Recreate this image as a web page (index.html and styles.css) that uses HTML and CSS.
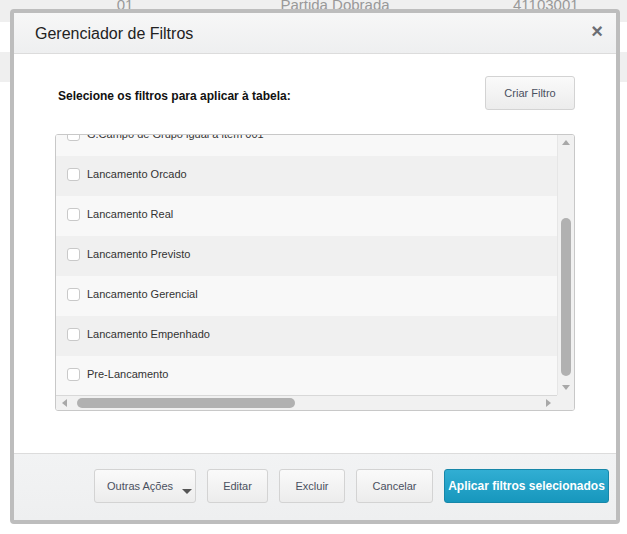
FILE: index.html
```html
<!DOCTYPE html>
<html lang="pt-BR">
<head>
    <meta charset="UTF-8">
    <title>Gerenciador de Filtros</title>
    <link rel="stylesheet" href="styles.css">
</head>
<body>
    <table class="grid">
        <colgroup><col class="c1"><col class="c2"><col class="c3"></colgroup>
        <tr class="odd"><td>01</td><td>Partida Dobrada</td><td class="num">41103001</td></tr>
        <tr><td></td><td></td><td></td></tr>
        <tr class="odd"><td></td><td></td><td></td></tr>
        <tr><td></td><td></td><td></td></tr>
    </table>

    <div class="modal">
        <div class="modal-header">
            <h3>Gerenciador de Filtros</h3>
            <span class="close">&times;</span>
        </div>

        <div class="modal-body">
            <div class="toolbar">
                <label>Selecione os filtros para aplicar à tabela:</label>
                <button class="btn">Criar Filtro</button>
            </div>

            <div class="list-box">
                <div class="list-view">
                    <ul class="filter-list">
                        <li><span class="check"></span>G.Campo de Grupo igual a item 001</li>
                        <li><span class="check"></span>Lancamento Orcado</li>
                        <li><span class="check"></span>Lancamento Real</li>
                        <li><span class="check"></span>Lancamento Previsto</li>
                        <li><span class="check"></span>Lancamento Gerencial</li>
                        <li><span class="check"></span>Lancamento Empenhado</li>
                        <li><span class="check"></span>Pre-Lancamento</li>
                    </ul>
                </div>
                <div class="vscroll">
                    <span class="arrow up"></span>
                    <div class="vtrack"><div class="vthumb"></div></div>
                    <span class="arrow down"></span>
                </div>
                <div class="hscroll">
                    <span class="arrow left"></span>
                    <div class="htrack"><div class="hthumb"></div></div>
                    <span class="arrow right"></span>
                </div>
                <div class="corner"></div>
            </div>
        </div>

        <div class="modal-footer">
            <button class="btn btn-menu">Outras Ações<span class="caret"></span></button>
            <button class="btn w-edit">Editar</button>
            <button class="btn w-del">Excluir</button>
            <button class="btn w-cancel">Cancelar</button>
            <button class="btn btn-primary">Aplicar filtros selecionados</button>
        </div>
    </div>
</body>
</html>
```

FILE: styles.css
```css
body {
    margin: 0;
    font-family: 'Liberation Sans', Arial, sans-serif;
    background: #fff;
    color: #333;
    overflow: hidden;
}
.grid {
    width: 100%;
    table-layout: fixed;
    border-collapse: collapse;
}
.grid .c1 { width: 250px; }
.grid .c2 { width: 170px; }
.grid td {
    height: 30px;
    padding: 0;
    text-align: center;
    color: #999;
    font-size: 15px;
    vertical-align: top;
    line-height: 28px;
    white-space: nowrap;
}
.grid td.num {
    text-align: left;
    padding-left: 93px;
}
.grid tr:first-child td {
    height: 22px;
    line-height: 10px;
}
.grid tr.odd td {
    background: #efefef;
}
.modal {
    position: absolute;
    left: 10px;
    top: 9px;
    width: 602px;
    border: 4px solid #bdbdbd;
    border-radius: 4px;
    background: #fff;
}
.modal-header {
    height: 40px;
    display: flex;
    align-items: center;
    justify-content: space-between;
    padding: 0 13px 0 21px;
    background: linear-gradient(#f7f7f7, #eeeff0);
    border-bottom: 1px solid #dcdcdc;
}
.modal-header h3 {
    margin: 0;
    font-weight: normal;
    font-size: 16px;
    color: #222;
    padding-top: 2px;
}
.close {
    font-size: 20px;
    font-weight: bold;
    color: #6b6e74;
    margin-top: -4px;
}
.modal-body {
    padding: 22px 41px 42px;
}
.toolbar {
    display: flex;
    justify-content: space-between;
    align-items: center;
    margin-bottom: 24px;
}
.toolbar label {
    font-weight: bold;
    font-size: 12px;
    color: #111;
    padding: 5px 0 0 3px;
}
.btn {
    height: 34px;
    padding: 0 10px;
    border: 1px solid #d3d3d3;
    border-radius: 3px;
    background: linear-gradient(#fafafa, #ececec);
    font-family: inherit;
    font-size: 11px;
    color: #4a5060;
    white-space: nowrap;
}
.toolbar .btn {
    width: 90px;
}
.list-box {
    display: grid;
    grid-template-columns: 1fr 17px;
    grid-template-rows: 260px 15px;
    border: 1px solid #c8c8c8;
    border-radius: 3px;
    overflow: hidden;
}
.list-view {
    overflow: hidden;
    background: #f8f8f8;
}
.filter-list {
    list-style: none;
    margin: -19px 0 0;
    padding: 0;
}
.filter-list li {
    height: 40px;
    box-sizing: border-box;
    display: flex;
    align-items: center;
    padding: 0 0 4px 11px;
    font-size: 11px;
    color: #333;
    background: #f8f8f8;
}
.filter-list li:nth-child(even) {
    background: #f0f0f0;
}
.check {
    width: 11px;
    height: 11px;
    border: 1px solid #c9c9c9;
    border-radius: 3px;
    background: #fff;
    margin-right: 7px;
}
.vscroll, .hscroll, .corner {
    background: #f1f1f1;
}
.vscroll {
    display: flex;
    flex-direction: column;
    align-items: center;
    border-left: 1px solid #e6e6e6;
}
.vtrack {
    flex: 1;
    width: 100%;
    display: flex;
    justify-content: center;
    padding: 73px 0 9px;
    box-sizing: border-box;
}
.vthumb {
    width: 10px;
    height: 100%;
    border-radius: 5px;
    background: #b1b1b1;
}
.hscroll {
    display: flex;
    align-items: center;
    border-top: 1px solid #d8d8d8;
}
.htrack {
    flex: 1;
    padding: 0 6px 0 10px;
}
.hthumb {
    width: 218px;
    height: 10px;
    border-radius: 5px;
    background: #b1b1b1;
}
.arrow {
    width: 0;
    height: 0;
    border: 4px solid transparent;
}
.arrow.up {
    border-bottom: 5px solid #a8a8a8;
    border-top: 0;
    margin-top: 5px;
}
.arrow.down {
    border-top: 5px solid #a8a8a8;
    border-bottom: 0;
    margin-bottom: 5px;
}
.arrow.left {
    border-right: 5px solid #a8a8a8;
    border-left: 0;
    margin-left: 6px;
}
.arrow.right {
    border-left: 5px solid #a8a8a8;
    border-right: 0;
    margin-right: 6px;
}
.modal-footer {
    display: flex;
    justify-content: flex-end;
    gap: 11px;
    padding: 15px 7px 17px;
    background: linear-gradient(#f2f3f4, #eeeff0);
    border-top: 1px solid #dcdcdc;
}
.btn-menu {
    position: relative;
    width: 102px;
    text-align: left;
    padding-left: 12px;
}
.caret {
    position: absolute;
    right: 3px;
    bottom: 8px;
    border: 5px solid transparent;
    border-top: 5px solid #555;
    border-bottom: 0;
}
.w-edit { width: 61px; }
.w-del { width: 66px; }
.w-cancel { width: 77px; }
.btn-primary {
    width: 165px;
    padding: 0;
    border-color: #1787a9;
    background: linear-gradient(#31aed3, #1797bd);
    color: #fff;
    font-weight: bold;
    font-size: 12px;
}
```
